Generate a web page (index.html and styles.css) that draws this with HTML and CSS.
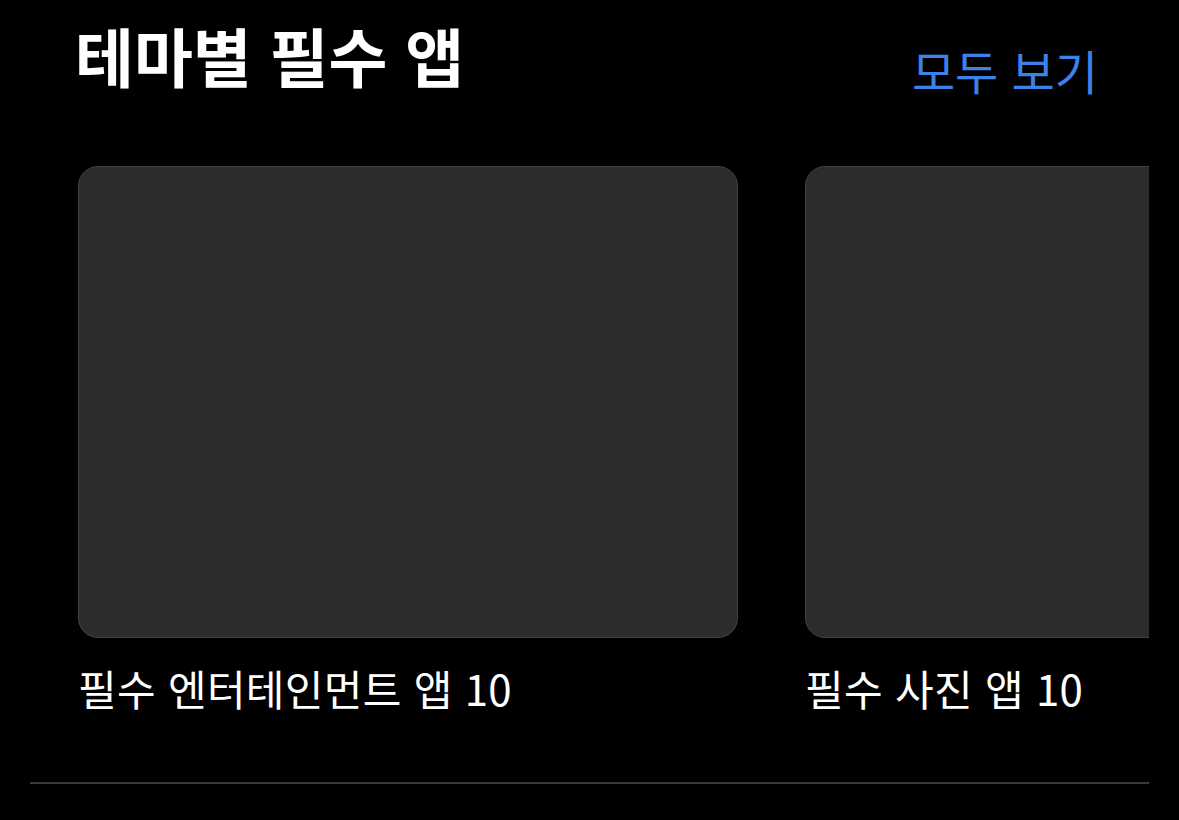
FILE: index.html
```html
<!DOCTYPE html>
<html lang="ko">
<head>
<meta charset="utf-8">
<link rel="stylesheet" href="styles.css">
</head>
<body>
<section class="shelf">
  <header class="shelf-head">
    <h2 class="shelf-title">테마별 필수 앱</h2>
    <a class="see-all" href="#">모두 보기</a>
  </header>
  <div class="shelf-scroller">
    <div class="shelf-track">
      <div class="collection">
        <div class="collection-art"></div>
        <div class="collection-name">필수 엔터테인먼트 앱 10</div>
      </div>
      <div class="collection">
        <div class="collection-art"></div>
        <div class="collection-name">필수 사진 앱 10</div>
      </div>
    </div>
  </div>
  <div class="divider"></div>
</section>
</body>
</html>
```

FILE: styles.css
```css
* { box-sizing: border-box; }
html, body {
  margin: 0;
  padding: 0;
  background: #000;
  width: 1179px;
  height: 820px;
  overflow: hidden;
  font-family: "Noto Sans CJK KR", "Noto Sans", sans-serif;
  color: #fff;
}
.shelf {
  padding: 0 30px;
}
.shelf-head {
  display: flex;
  justify-content: space-between;
  align-items: flex-start;
  padding: 19px 51px 0 45px;
  height: 166px;
}
.shelf-title {
  margin: 0;
  font-size: 64px;
  font-weight: 700;
  line-height: 1.1;
  letter-spacing: 0;
}
.see-all {
  margin-top: 16px;
  font-size: 47px;
  font-weight: 400;
  line-height: normal;
  color: #3d82eb;
  text-decoration: none;
  letter-spacing: 0;
}
.shelf-scroller {
  overflow: hidden;
  padding-left: 48px;
}
.shelf-track {
  display: flex;
  gap: 67px;
}
.collection {
  flex: 0 0 660px;
}
.collection-art {
  height: 472px;
  background: #2c2c2e;
  border: 1px solid #444446;
  border-radius: 20px;
}
.collection-name {
  margin-top: 19px;
  font-size: 42px;
  line-height: normal;
  letter-spacing: 0.3px;
  white-space: nowrap;
}
.divider {
  margin-top: 64px;
  height: 2px;
  background: #3a3a3c;
}
```
